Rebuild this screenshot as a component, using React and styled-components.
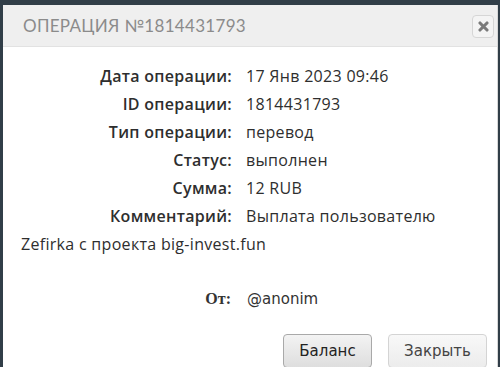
import styled, { createGlobalStyle } from "styled-components"

const Global = createGlobalStyle`
  html, body {
    margin: 0;
    padding: 0;
    background: #313e48;
    overflow: hidden;
  }
`;

const Screen = styled.div`
  width: 500px;
  height: 367px;
  padding: 5px 2px 0 3px;
  box-sizing: border-box;
  overflow: hidden;
`;

const Dialog = styled.div`
  background: #fff;
  height: 400px;
  border-right: 1px solid #d8d8d8;
  display: flex;
  flex-direction: column;
`;

const Header = styled.div`
  height: 41px;
  background: #efefef;
  border-bottom: 1px solid #e2e2e2;
  display: flex;
  align-items: center;
  justify-content: space-between;
  padding: 0 3px 0 20px;
`;

const Title = styled.h3`
  margin: 0;
  font-family: "Lato", sans-serif;
  font-weight: 400;
  font-size: 17px;
  letter-spacing: 0.3px;
  color: #8b8b8b;
`;

const CloseBtn = styled.button`
  width: 22px;
  height: 23px;
  padding: 0;
  margin-top: 1px;
  border: 1px solid #d6d6d6;
  border-radius: 4px;
  background: #f4f4f4;
  display: flex;
  align-items: center;
  justify-content: center;
`;

const Body = styled.div`
  padding: 18px 0 0 18px;
  font-family: "Open Sans", sans-serif;
  font-size: 16px;
  letter-spacing: 0.3px;
  color: #2e2e2e;
`;

const Grid = styled.div`
  display: grid;
  grid-template-columns: 211px auto;
  column-gap: 14px;
  row-gap: 6px;
  line-height: 22px;
`;

const Label = styled.div`
  text-align: right;
  font-weight: 600;
`;

const Value = styled.div``;

const Wrap = styled.div`
  line-height: 22px;
  margin-top: 6px;
`;

const FromRow = styled.div`
  display: grid;
  grid-template-columns: 210px auto;
  column-gap: 16px;
  margin-top: 33px;
  font-family: "DejaVu Sans", sans-serif;
  font-size: 15px;
  letter-spacing: 0;
  line-height: 22px;
  color: #333;
`;

const FromLabel = styled.div`
  text-align: right;
  font-weight: 700;
  font-family: "Liberation Serif", serif;
  font-size: 16px;
`;

const Footer = styled.div`
  display: flex;
  justify-content: flex-end;
  gap: 16px;
  padding: 24px 10px 0 0;
`;

const Button = styled.button`
  font-family: "DejaVu Sans", sans-serif;
  font-size: 15px;
  color: ${p => (p.$primary ? "#222" : "#444")};
  width: ${p => p.$w}px;
  height: 34px;
  padding: 0;
  border-radius: 4px;
  border: 1px solid ${p => (p.$primary ? "#a9a9a9" : "#d4d4d4")};
  background: ${p =>
    p.$primary
      ? "linear-gradient(#f3f3f3, #dedede)"
      : "linear-gradient(#f8f8f8, #ececec)"};
`;

const rows = [
  ["Дата операции:", "17 Янв 2023 09:46"],
  ["ID операции:", "1814431793"],
  ["Тип операции:", "перевод"],
  ["Статус:", "выполнен"],
  ["Сумма:", "12 RUB"],
  ["Комментарий:", "Выплата пользователю"],
];

export default function App() {
  return (
    <Screen>
      <Global />
      <Dialog>
        <Header>
          <Title>ОПЕРАЦИЯ №1814431793</Title>
          <CloseBtn>
            <svg width="11" height="11" viewBox="0 0 10 10">
              <path d="M1.8 1.8 L8.2 8.2 M8.2 1.8 L1.8 8.2" stroke="#7a7a7a" strokeWidth="2.8" strokeLinecap="round" />
            </svg>
          </CloseBtn>
        </Header>
        <Body>
          <Grid>
            {rows.map(([l, v]) => (
              <>
                <Label key={l}>{l}</Label>
                <Value key={v}>{v}</Value>
              </>
            ))}
          </Grid>
          <Wrap>Zefirka с проекта big-invest.fun</Wrap>
          <FromRow>
            <FromLabel>От:</FromLabel>
            <div>@anonim</div>
          </FromRow>
        </Body>
        <Footer>
          <Button $primary $w={89}>Баланс</Button>
          <Button $w={99}>Закрыть</Button>
        </Footer>
      </Dialog>
    </Screen>
  )
}
